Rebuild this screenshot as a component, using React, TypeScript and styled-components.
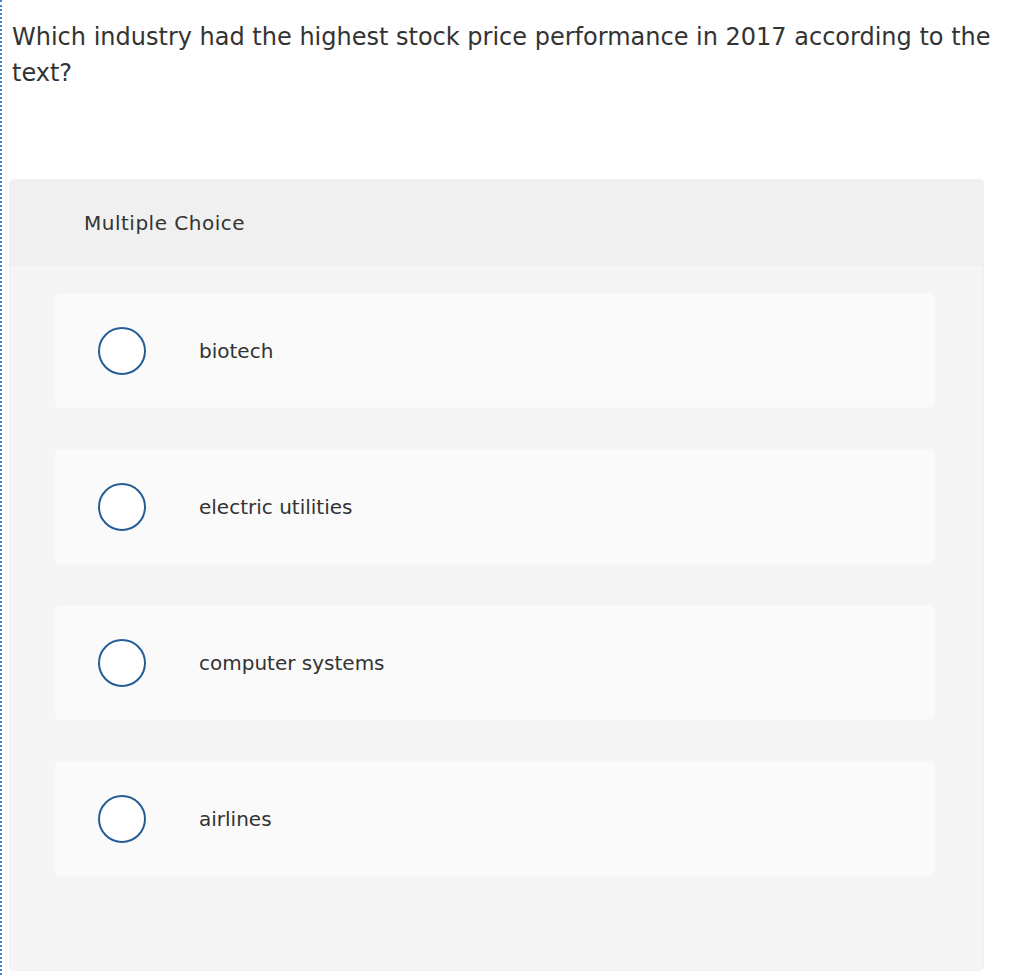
import React from "react";
import styled, { createGlobalStyle } from "styled-components";

const GlobalStyle = createGlobalStyle`
	html, body {
		margin: 0;
		padding: 0;
		background: #ffffff;
	}
	body {
		font-family: "DejaVu Sans", "Open Sans", sans-serif;
		color: #333333;
	}
`;

const choices = ["biotech", "electric utilities", "computer systems", "airlines"];

const App: React.FC = () => {
	return (
		<>
			<GlobalStyle />
			<Page>
				<Question>
					Which industry had the highest stock price performance in 2017 according to the text?
				</Question>
				<Card>
					<CardHeader>Multiple Choice</CardHeader>
					<ChoiceList>
						{choices.map((label) => (
							<Choice key={label}>
								<Radio />
								<ChoiceLabel>{label}</ChoiceLabel>
							</Choice>
						))}
					</ChoiceList>
				</Card>
			</Page>
		</>
	);
};
export default App;

// style 영역
const Page = styled.div`
	min-height: 975px;
	box-sizing: border-box;
	border-left: 2px dotted #3d84d6;
	padding: 19px 28px 0 8px;
`;

const Question = styled.h1`
	margin: 0 0 89px;
	padding-left: 2px;
	font-size: 24px;
	font-weight: 400;
	line-height: 36px;
	color: #333333;
`;

const Card = styled.section`
	width: 973px;
	border-radius: 4px;
	background: #f5f5f5;
	box-shadow: 0 0 0 1px #f0f0f0;
	overflow: hidden;
`;

const CardHeader = styled.div`
	height: 86px;
	display: flex;
	align-items: center;
	padding-left: 74px;
	background: #f0f0f0;
	font-size: 20px;
	letter-spacing: 0.5px;
	color: #333333;
`;

const ChoiceList = styled.div`
	display: flex;
	flex-direction: column;
	gap: 41px;
	padding: 27px 48px 94px 45px;
`;

const Choice = styled.label`
	height: 115px;
	display: flex;
	align-items: center;
	gap: 53px;
	padding-left: 43px;
	border-radius: 6px;
	background: #fafafa;
	cursor: pointer;
`;

const Radio = styled.span`
	width: 48px;
	height: 48px;
	box-sizing: border-box;
	border-radius: 50%;
	border: 2px solid #245d97;
	background: #ffffff;
	flex-shrink: 0;
`;

const ChoiceLabel = styled.span`
	font-size: 20px;
	color: #333333;
`;
